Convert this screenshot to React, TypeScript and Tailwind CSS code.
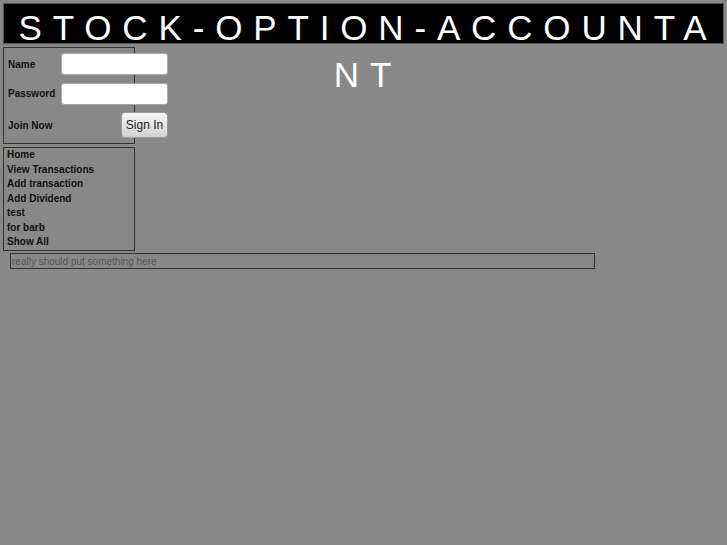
export default function App() {
  const links = [
    'Home',
    'View Transactions',
    'Add transaction',
    'Add Dividend',
    'test',
    'for barb',
    'Show All',
  ];

  return (
    <div className="min-h-screen bg-[#888888] p-[3px] font-['Liberation_Sans',Arial,sans-serif] text-[#111]">
      {/* Banner */}
      <h1 className="h-[41px] bg-black border border-[#555] text-white text-[35px] leading-[47px] tracking-[0.31em] text-center font-normal pl-[9px] break-all">
        STOCK-OPTION-ACCOUNTANT
      </h1>

      {/* Login */}
      <div className="mt-[3px] w-[132px] border border-[#333] pt-[5px] pb-[5px] pl-[4px]">
        <div className="grid grid-cols-[53px_107px] gap-y-[8px] w-[160px]">
          <label className="text-[10px] font-bold flex items-center">Name</label>
          <input className="h-[22px] w-[107px] bg-white border border-[#aaa] rounded-[3px]" />
          <label className="text-[10px] font-bold flex items-center -mt-[1px]">Password</label>
          <input type="password" className="h-[22px] w-[107px] bg-white border border-[#aaa] rounded-[3px]" />
          <a className="text-[10px] font-bold flex items-center -mt-[1px]">Join Now</a>
          <button className="-mt-[1px] justify-self-end h-[26px] w-[47px] rounded-[4px] border border-[#9a9a9a] bg-gradient-to-b from-[#f6f6f6] to-[#d2d2d2] text-[12px] text-[#222]">
            Sign In
          </button>
        </div>
      </div>

      {/* Nav */}
      <div className="mt-[3px] w-[132px] border border-[#333] pl-[3px]">
        {links.map((l) => (
          <a key={l} className="block text-[10px] font-bold leading-[14.5px] text-[#111]">
            {l}
          </a>
        ))}
      </div>

      {/* Status */}
      <div className="mt-[2px] ml-[7px] w-[585px] h-[16px] border border-[#333] pl-[1px] text-[10px] leading-[15px] text-[#555]">
        really should put something here
      </div>
    </div>
  );
}
